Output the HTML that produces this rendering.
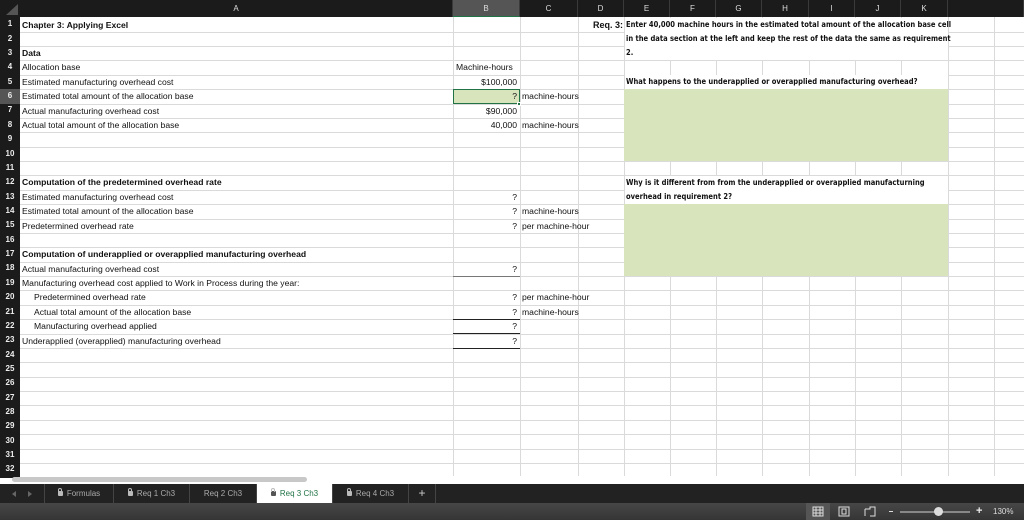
<!DOCTYPE html>
<html><head><meta charset="utf-8"><style>
*{margin:0;padding:0;box-sizing:border-box}
body{width:1024px;height:520px;overflow:hidden;background:#fff;font-family:"Liberation Sans",sans-serif;position:relative}
.a{position:absolute;white-space:nowrap}
.hd{position:absolute;top:0;height:17px;background:#1b1b1b;color:#ddd;font-size:8px;text-align:center;line-height:17px;border-right:1px solid #3a3a3a}
.rn{position:absolute;left:0;width:20px;background:#1b1b1b;color:#eee;font-size:8px;text-align:center;font-weight:bold}
.vl{position:absolute;top:17px;height:461px;width:1px;background:#dadada}
.hl{position:absolute;left:20px;width:1004px;height:1px;background:#dadada}
.t{position:absolute;font-size:8.6px;color:#111;white-space:nowrap;line-height:14px}
.b{font-weight:bold}
.r{text-align:right}
.q{position:absolute;font-family:"DejaVu Sans",sans-serif;font-weight:bold;font-size:7.6px;color:#111;white-space:nowrap;line-height:14px;transform:scaleX(0.89);transform-origin:0 0}
.tab{position:absolute;top:484px;height:19px;font-size:8px;color:#aaa;line-height:19px;text-align:center;border-right:1px solid #444}
.lk{display:inline-block;width:5px;height:5px;background:#bbb;border-radius:1px;position:relative;margin-right:4px;top:0px}
.lk:before{content:"";position:absolute;left:0.5px;top:-3px;width:4px;height:4px;border:1px solid #bbb;border-bottom:none;border-radius:2px 2px 0 0;box-sizing:border-box}
</style></head><body>
<!-- grid horizontal -->
<div class="hl" style="top:31.7px"></div><div class="hl" style="top:46px"></div><div class="hl" style="top:60.4px"></div><div class="hl" style="top:74.8px"></div><div class="hl" style="top:89.2px"></div><div class="hl" style="top:103.5px"></div><div class="hl" style="top:117.9px"></div><div class="hl" style="top:132.3px"></div><div class="hl" style="top:146.7px"></div><div class="hl" style="top:161px"></div><div class="hl" style="top:175.4px"></div><div class="hl" style="top:189.8px"></div><div class="hl" style="top:204.2px"></div><div class="hl" style="top:218.5px"></div><div class="hl" style="top:232.9px"></div><div class="hl" style="top:247.3px"></div><div class="hl" style="top:261.7px"></div><div class="hl" style="top:276px"></div><div class="hl" style="top:290.4px"></div><div class="hl" style="top:304.8px"></div><div class="hl" style="top:319.2px"></div><div class="hl" style="top:333.5px"></div><div class="hl" style="top:347.9px"></div><div class="hl" style="top:362.3px"></div><div class="hl" style="top:376.7px"></div><div class="hl" style="top:391px"></div><div class="hl" style="top:405.4px"></div><div class="hl" style="top:419.8px"></div><div class="hl" style="top:434.2px"></div><div class="hl" style="top:448.5px"></div><div class="hl" style="top:462.9px"></div>
<!-- vertical -->
<div class="vl" style="left:453px"></div><div class="vl" style="left:520px"></div><div class="vl" style="left:578px"></div><div class="vl" style="left:624px"></div><div class="vl" style="left:670px"></div><div class="vl" style="left:716px"></div><div class="vl" style="left:762px"></div><div class="vl" style="left:809px"></div><div class="vl" style="left:855px"></div><div class="vl" style="left:901px"></div><div class="vl" style="left:948px"></div><div class="vl" style="left:994px"></div>
<!-- masks for merged areas -->
<div class="a" style="left:625px;top:18px;width:323px;height:42.4px;background:#fff"></div>
<div class="a" style="left:625px;top:75.3px;width:323px;height:13.5px;background:#fff"></div>
<div class="a" style="left:625px;top:175.9px;width:323px;height:28px;background:#fff"></div>
<div class="a" style="left:0;top:17px;width:453px;height:14.5px;background:#fff"></div>
<div class="a" style="left:579px;top:17px;width:45px;height:14.5px;background:#fff"></div>
<!-- green fills -->
<div class="a" style="left:624px;top:89.2px;width:324px;height:72px;background:#d8e4bc"></div>
<div class="a" style="left:624px;top:204.2px;width:324px;height:72px;background:#d8e4bc"></div>
<!-- headers -->
<div class="a" style="left:0;top:0;width:20px;height:17px;background:#1b1b1b"></div>
<div class="a" style="left:6px;top:4px;width:0;height:0;border-left:12px solid transparent;border-bottom:11px solid #555"></div>
<div class="hd" style="left:20px;width:433px">A</div>
<div class="hd" style="left:453px;width:67px;background:#555;border-bottom:1px solid #217346">B</div>
<div class="hd" style="left:520px;width:58px">C</div>
<div class="hd" style="left:578px;width:46px">D</div>
<div class="hd" style="left:624px;width:46px">E</div>
<div class="hd" style="left:670px;width:46px">F</div>
<div class="hd" style="left:716px;width:46px">G</div>
<div class="hd" style="left:762px;width:47px">H</div>
<div class="hd" style="left:809px;width:46px">I</div>
<div class="hd" style="left:855px;width:46px">J</div>
<div class="hd" style="left:901px;width:47px">K</div>
<div class="hd" style="left:948px;width:76px"></div>
<!-- row numbers -->
<div class="rn" style="top:17px;height:461px"></div>
<div class="a" style="left:0;top:89.2px;width:20px;height:14.4px;background:#555"></div>
<div class="a" style="left:0;top:17px;width:20px;font-size:8px;color:#eee;font-weight:bold;text-align:center;line-height:14.37px">
<div style="height:14.7px">1</div><div style="height:14.37px">2</div><div style="height:14.37px">3</div><div style="height:14.37px">4</div><div style="height:14.37px">5</div><div style="height:14.37px">6</div><div style="height:14.37px">7</div><div style="height:14.37px">8</div><div style="height:14.37px">9</div><div style="height:14.37px">10</div><div style="height:14.37px">11</div><div style="height:14.37px">12</div><div style="height:14.37px">13</div><div style="height:14.37px">14</div><div style="height:14.37px">15</div><div style="height:14.37px">16</div><div style="height:14.37px">17</div><div style="height:14.37px">18</div><div style="height:14.37px">19</div><div style="height:14.37px">20</div><div style="height:14.37px">21</div><div style="height:14.37px">22</div><div style="height:14.37px">23</div><div style="height:14.37px">24</div><div style="height:14.37px">25</div><div style="height:14.37px">26</div><div style="height:14.37px">27</div><div style="height:14.37px">28</div><div style="height:14.37px">29</div><div style="height:14.37px">30</div><div style="height:14.37px">31</div><div style="height:14.37px">32</div>
</div>
<!-- column A text -->
<div class="t b" style="left:22px;top:17.5px">Chapter 3: Applying Excel</div>
<div class="t b" style="left:22px;top:46px">Data</div>
<div class="t" style="left:22px;top:60.4px">Allocation base</div>
<div class="t" style="left:22px;top:74.8px">Estimated manufacturing overhead cost</div>
<div class="t" style="left:22px;top:89.2px">Estimated total amount of the allocation base</div>
<div class="t" style="left:22px;top:103.5px">Actual manufacturing overhead cost</div>
<div class="t" style="left:22px;top:117.9px">Actual total amount of the allocation base</div>
<div class="t b" style="left:22px;top:175.4px">Computation of the predetermined overhead rate</div>
<div class="t" style="left:22px;top:189.8px">Estimated manufacturing overhead cost</div>
<div class="t" style="left:22px;top:204.2px">Estimated total amount of the allocation base</div>
<div class="t" style="left:22px;top:218.5px">Predetermined overhead rate</div>
<div class="t b" style="left:22px;top:247.3px">Computation of underapplied or overapplied manufacturing overhead</div>
<div class="t" style="left:22px;top:261.7px">Actual manufacturing overhead cost</div>
<div class="t" style="left:22px;top:276px">Manufacturing overhead cost applied to Work in Process during the year:</div>
<div class="t" style="left:34px;top:290.4px">Predetermined overhead rate</div>
<div class="t" style="left:34px;top:304.8px">Actual total amount of the allocation base</div>
<div class="t" style="left:34px;top:319.2px">Manufacturing overhead applied</div>
<div class="t" style="left:22px;top:333.5px">Underapplied (overapplied) manufacturing overhead</div>
<!-- B/C -->
<div class="t" style="left:456px;top:60.4px">Machine-hours</div>
<div class="t r" style="left:453px;top:74.8px;width:64px">$100,000</div>
<div class="a" style="left:453px;top:88.7px;width:67px;height:15.5px;background:#d8e4bc;border:1.5px solid #217346"></div>
<div class="a" style="left:517px;top:101.5px;width:4px;height:4px;background:#217346;border:1px solid #fff"></div>
<div class="t r" style="left:453px;top:89.2px;width:64px">?</div>
<div class="t" style="left:522px;top:89.2px">machine-hours</div>
<div class="t r" style="left:453px;top:103.5px;width:64px">$90,000</div>
<div class="t r" style="left:453px;top:117.9px;width:64px">40,000</div>
<div class="t" style="left:522px;top:117.9px">machine-hours</div>
<div class="t r" style="left:453px;top:189.8px;width:64px">?</div>
<div class="t r" style="left:453px;top:204.2px;width:64px">?</div>
<div class="t" style="left:522px;top:204.2px">machine-hours</div>
<div class="t r" style="left:453px;top:218.5px;width:64px">?</div>
<div class="t" style="left:522px;top:218.5px">per machine-hour</div>
<div class="t r" style="left:453px;top:261.7px;width:64px">?</div>
<div class="a" style="left:453px;top:275.5px;width:67px;height:1px;background:#777"></div>
<div class="t r" style="left:453px;top:290.4px;width:64px">?</div>
<div class="t" style="left:522px;top:290.4px">per machine-hour</div>
<div class="t r" style="left:453px;top:304.8px;width:64px">?</div>
<div class="t" style="left:522px;top:304.8px">machine-hours</div>
<div class="a" style="left:453px;top:319px;width:67px;height:1px;background:#222"></div>
<div class="t r" style="left:453px;top:319.2px;width:64px">?</div>
<div class="a" style="left:453px;top:333px;width:67px;height:1px;background:#222"></div>
<div class="t r" style="left:453px;top:333.5px;width:64px">?</div>
<div class="a" style="left:453px;top:347.5px;width:67px;height:1.5px;background:#222"></div>
<!-- D/E -->
<div class="t b r" style="left:578px;top:17.5px;width:45px;font-size:9px">Req. 3:</div>
<div class="q" style="left:626px;top:17.5px">Enter 40,000 machine hours in the estimated total amount of the allocation base cell</div>
<div class="q" style="left:626px;top:31.9px">in the data section at the left and keep the rest of the data the same as requirement</div>
<div class="q" style="left:626px;top:46.2px">2.</div>
<div class="q" style="left:626px;top:75px">What happens to the underapplied or overapplied manufacturing overhead?</div>
<div class="q" style="left:626px;top:176px">Why is it different from from the underapplied or overapplied manufacturning</div>
<div class="q" style="left:626px;top:190px">overhead in requirement 2?</div>
<!-- scrollbar strip -->
<div class="a" style="left:20px;top:476px;width:1004px;height:8px;background:#fff"></div>
<div class="a" style="left:12px;top:477px;width:295px;height:5px;background:#c8c8c8;border-radius:3px"></div>
<!-- tabs -->
<div class="a" style="left:0;top:484px;width:1024px;height:19px;background:#222"></div>
<div class="a" style="left:12px;top:491px;width:0;height:0;border-top:3px solid transparent;border-bottom:3px solid transparent;border-right:4px solid #666"></div>
<div class="a" style="left:28px;top:491px;width:0;height:0;border-top:3px solid transparent;border-bottom:3px solid transparent;border-left:4px solid #666"></div>
<div class="tab" style="left:44px;width:70px;border-left:1px solid #444"><span class="lk"></span>Formulas</div>
<div class="tab" style="left:114px;width:76px"><span class="lk"></span>Req 1 Ch3</div>
<div class="tab" style="left:190px;width:67px">Req 2 Ch3</div>
<div class="tab" style="left:257px;width:76px;background:#fff;color:#217346;height:20px"><span class="lk" style="background:#555"></span>Req 3 Ch3</div>
<div class="tab" style="left:333px;width:76px"><span class="lk"></span>Req 4 Ch3</div>
<div class="tab" style="left:409px;width:27px;font-size:12px;color:#ccc">+</div>
<!-- status -->
<div class="a" style="left:0;top:503px;width:1024px;height:17px;background:linear-gradient(#474747,#353535)"></div>
<div class="a" style="left:806px;top:503px;width:24px;height:17px;background:#555"></div>
<svg class="a" style="left:812px;top:506px" width="12" height="11"><path d="M1 1h10v9H1zM1 4h10M1 7h10M4 1v9M8 1v9" stroke="#ddd" fill="none" stroke-width="1"/></svg>
<svg class="a" style="left:838px;top:506px" width="12" height="11"><path d="M1 1h10v9H1zM4 3h4v5H4z" stroke="#ddd" fill="none"/></svg>
<svg class="a" style="left:864px;top:506px" width="12" height="11"><path d="M1 3h5V1h5v9H6M1 3v7" stroke="#ddd" fill="none"/></svg>
<div class="a" style="left:889px;top:511px;width:4px;height:1px;background:#ddd"></div>
<div class="a" style="left:900px;top:511px;width:70px;height:2px;background:#888"></div>
<div class="a" style="left:934px;top:507px;width:9px;height:9px;border-radius:50%;background:#ddd"></div>
<div class="a" style="left:976px;top:503px;color:#eee;font-size:11px;line-height:17px;font-weight:bold">+</div>
<div class="a" style="left:993px;top:503px;color:#ddd;font-size:8px;line-height:17px">130%</div>
</body></html>
